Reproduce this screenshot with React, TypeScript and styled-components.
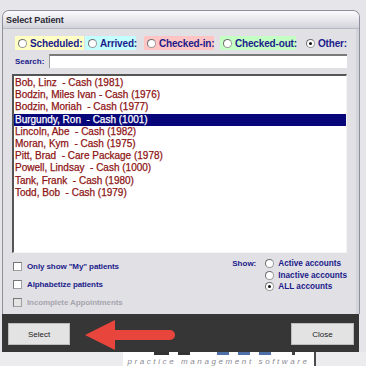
import { createGlobalStyle, styled } from "styled-components";

const GlobalStyle = createGlobalStyle`
    html, body {
        margin: 0;
        padding: 0;
        background: #e6e6ea;
        font-family: "Liberation Sans", Arial, sans-serif;
    }
`;

const Page = styled.div`
    width: 366px;
    height: 366px;
    overflow: hidden;
    display: flex;
    flex-direction: column;
    padding-top: 10px;
    box-sizing: border-box;
`;

const Window = styled.div`
    margin-left: 2px;
    width: 358px;
    border: 1px solid #8f8f9c;
    border-bottom: none;
    border-radius: 7px 7px 0 0;
    background: #e1e0e5;
    display: flex;
    flex-direction: column;
    box-sizing: border-box;
`;

const TitleBar = styled.div`
    height: 17px;
    border-radius: 6px 6px 0 0;
    background: linear-gradient(#fbfbfd, #e4e4ea 60%, #d2d2da);
    border-bottom: 1px solid #b9b9c4;
    display: flex;
    align-items: center;
    padding-left: 3px;
    font-size: 9px;
    font-weight: bold;
    color: #2a2a33;
    letter-spacing: -0.1px;
`;

//corpo da janela, com uma faixa mais escura na borda direita
const Body = styled.div`
    display: flex;
    flex-direction: column;
    padding: 7px 9px 0 9px;
    border-right: 3px solid #d3d3da;
`;

const FilterRow = styled.div`
    display: flex;
    align-items: center;
    height: 14px;
    padding-left: 3px;
`;

const Chip = styled.div<{ $bg: string; $w: number; $gap: number }>`
    display: flex;
    align-items: center;
    gap: 3px;
    height: 14px;
    width: ${(p) => p.$w}px;
    margin-left: ${(p) => p.$gap}px;
    padding-left: 3px;
    box-sizing: border-box;
    background: ${(p) => p.$bg};
    font-size: 10px;
    font-weight: bold;
    letter-spacing: -0.15px;
    color: #1c1c8a;
    white-space: nowrap;
`;

const Radio = styled.span<{ $on?: boolean }>`
    position: relative;
    width: 7px;
    height: 7px;
    border-radius: 50%;
    background: #fff;
    border: 1px solid #9a9a9a;
    border-top-color: #6e6e6e;
    border-left-color: #6e6e6e;
    flex: none;
    &::after {
        content: "";
        display: ${(p) => (p.$on ? "block" : "none")};
        position: absolute;
        left: 2px;
        top: 2px;
        width: 3px;
        height: 3px;
        border-radius: 50%;
        background: #111;
    }
`;

const SearchRow = styled.div`
    display: flex;
    align-items: center;
    margin-top: 4px;
    height: 14px;
    padding-left: 3px;
`;

const SearchLabel = styled.span`
    width: 34px;
    font-size: 8px;
    font-weight: bold;
    color: #1c1c8a;
`;

const SearchInput = styled.div`
    flex: 1;
    height: 14px;
    background: #fff;
    border-top: 2px solid #7a7a7a;
    border-left: 1px solid #9a9a9a;
    box-sizing: border-box;
`;

const ListBox = styled.div`
    margin-top: 6px;
    height: 179px;
    background: #fff;
    border-top: 2px solid #555;
    border-left: 2px solid #555;
    border-right: 1px solid #f4f4f4;
    border-bottom: 1px solid #f4f4f4;
    box-sizing: border-box;
    padding-top: 1px;
    display: flex;
    flex-direction: column;
`;

const Item = styled.div<{ $sel?: boolean }>`
    height: 12.2px;
    line-height: 12.2px;
    padding-left: 1px;
    font-size: 10px;
    white-space: pre;
    color: ${(p) => (p.$sel ? "#fff" : "#8e1414")};
    background: ${(p) => (p.$sel ? "#06067a" : "transparent")};
    -webkit-text-stroke: 0.25px currentColor;
`;

const Options = styled.div`
    display: flex;
    justify-content: space-between;
    height: 61px;
    padding-top: 8px;
    box-sizing: border-box;
`;

const Checks = styled.div`
    display: flex;
    flex-direction: column;
    gap: 8px;
    padding-left: 1px;
`;

const CheckRow = styled.div<{ $off?: boolean }>`
    display: flex;
    align-items: center;
    gap: 5px;
    height: 10px;
    font-size: 8px;
    font-weight: bold;
    letter-spacing: -0.1px;
    color: ${(p) => (p.$off ? "#a6a6ad" : "#1c1c8a")};
    white-space: nowrap;
`;

const Box = styled.span<{ $off?: boolean }>`
    width: 7px;
    height: 7px;
    background: ${(p) => (p.$off ? "#e4e4e4" : "#fff")};
    border: 1px solid #a0a0a0;
    border-top-color: #777;
    border-left-color: #777;
    flex: none;
`;

const ShowGroup = styled.div`
    display: flex;
    gap: 9px;
    margin-right: 0;
    margin-top: -3px;
`;

const ShowLabel = styled.span`
    font-size: 8px;
    font-weight: bold;
    color: #1c1c8a;
    line-height: 11px;
`;

const ShowList = styled.div`
    display: flex;
    flex-direction: column;
`;

const ShowRow = styled.div`
    display: flex;
    align-items: center;
    gap: 4px;
    height: 11.5px;
    font-size: 8.2px;
    font-weight: bold;
    color: #1c1c8a;
    white-space: nowrap;
`;

const ButtonBar = styled.div`
    position: relative;
    margin-left: 2px;
    width: 357px;
    height: 39px;
    background: #363636;
    display: flex;
    justify-content: space-between;
    align-items: flex-start;
    padding: 9px 5px 0 6px;
    box-sizing: border-box;
`;

const Button = styled.div<{ $w: number }>`
    width: ${(p) => p.$w}px;
    height: 22px;
    background: #e3e3e3;
    border: 1px solid #bcbcbc;
    box-sizing: border-box;
    display: flex;
    align-items: center;
    justify-content: center;
    font-size: 8px;
    color: #222;
`;

//seta vermelha de destaque por cima da barra
const Arrow = styled.svg`
    position: absolute;
    left: 81px;
    top: 5px;
`;

const Desktop = styled.div`
    flex: 1;
    display: flex;
    background: #ececee;
`;

const LogoPanel = styled.div`
    margin-left: 123px;
    width: 191px;
    background: #fff;
    border-right: 2px solid #4a4a4a;
    display: flex;
    flex-direction: column;
    align-items: center;
    overflow: hidden;
`;

const LogoBits = styled.div`
    height: 3px;
    width: 150px;
    margin-left: 20px;
    background: linear-gradient(90deg, #333 0 10%, transparent 10% 16%, #333 16% 24%, transparent 24% 42%, #4f6fa8 42% 50%, transparent 50% 56%, #4f6fa8 56% 64%, transparent 64% 70%, #4f6fa8 70% 78%, transparent 78% 92%, #444 92% 94%, transparent 94%);
`;

const Tagline = styled.div`
    margin-top: 2px;
    font-size: 8px;
    font-style: italic;
    letter-spacing: 2.6px;
    color: #8a8a92;
    white-space: nowrap;
`;

const patients = [
    "Bob, Linz  - Cash (1981)",
    "Bodzin, Miles Ivan - Cash (1976)",
    "Bodzin, Moriah  - Cash (1977)",
    "Burgundy, Ron  - Cash (1001)",
    "Lincoln, Abe  - Cash (1982)",
    "Moran, Kym  - Cash (1975)",
    "Pitt, Brad  - Care Package (1978)",
    "Powell, Lindsay  - Cash (1000)",
    "Tank, Frank  - Cash (1980)",
    "Todd, Bob  - Cash (1979)",
];

const filters = [
    { label: "Scheduled:", bg: "#ffffc4", w: 72, gap: 0 },
    { label: "Arrived:", bg: "#c4ffff", w: 51, gap: 1 },
    { label: "Checked-in:", bg: "#ffc4c4", w: 70, gap: 8 },
    { label: "Checked-out:", bg: "#c4ffc4", w: 76, gap: 6 },
    { label: "Other:", bg: "transparent", w: 46, gap: 7, on: true },
];

export default function App() {
    return (
        <>
            <GlobalStyle />
            <Page>
                <Window>
                    <TitleBar>Select Patient</TitleBar>
                    <Body>
                        <FilterRow>
                            {filters.map((f) => (
                                <Chip key={f.label} $bg={f.bg} $w={f.w} $gap={f.gap}>
                                    <Radio $on={f.on} />
                                    {f.label}
                                </Chip>
                            ))}
                        </FilterRow>
                        <SearchRow>
                            <SearchLabel>Search:</SearchLabel>
                            <SearchInput />
                        </SearchRow>
                        <ListBox>
                            {patients.map((p, i) => (
                                <Item key={p} $sel={i === 3}>{p}</Item>
                            ))}
                        </ListBox>
                        <Options>
                            <Checks>
                                <CheckRow><Box />Only show "My" patients</CheckRow>
                                <CheckRow><Box />Alphabetize patients</CheckRow>
                                <CheckRow $off><Box $off />Incomplete Appointments</CheckRow>
                            </Checks>
                            <ShowGroup>
                                <ShowLabel>Show:</ShowLabel>
                                <ShowList>
                                    <ShowRow><Radio />Active accounts</ShowRow>
                                    <ShowRow><Radio />Inactive accounts</ShowRow>
                                    <ShowRow><Radio $on />ALL accounts</ShowRow>
                                </ShowList>
                            </ShowGroup>
                        </Options>
                    </Body>
                </Window>
                <ButtonBar>
                    <Button $w={62}>Select</Button>
                    <Button $w={63}>Close</Button>
                    <Arrow width="94" height="32" viewBox="0 0 94 32">
                        <path
                            d="M2 16 L32 1 L32 11 L87 11 A5 5 0 0 1 87 21 L32 21 L32 31 Z"
                            fill="#e8463d"
                        />
                    </Arrow>
                </ButtonBar>
                <Desktop>
                    <LogoPanel>
                        <LogoBits />
                        <Tagline>practice management software</Tagline>
                    </LogoPanel>
                </Desktop>
            </Page>
        </>
    );
}
